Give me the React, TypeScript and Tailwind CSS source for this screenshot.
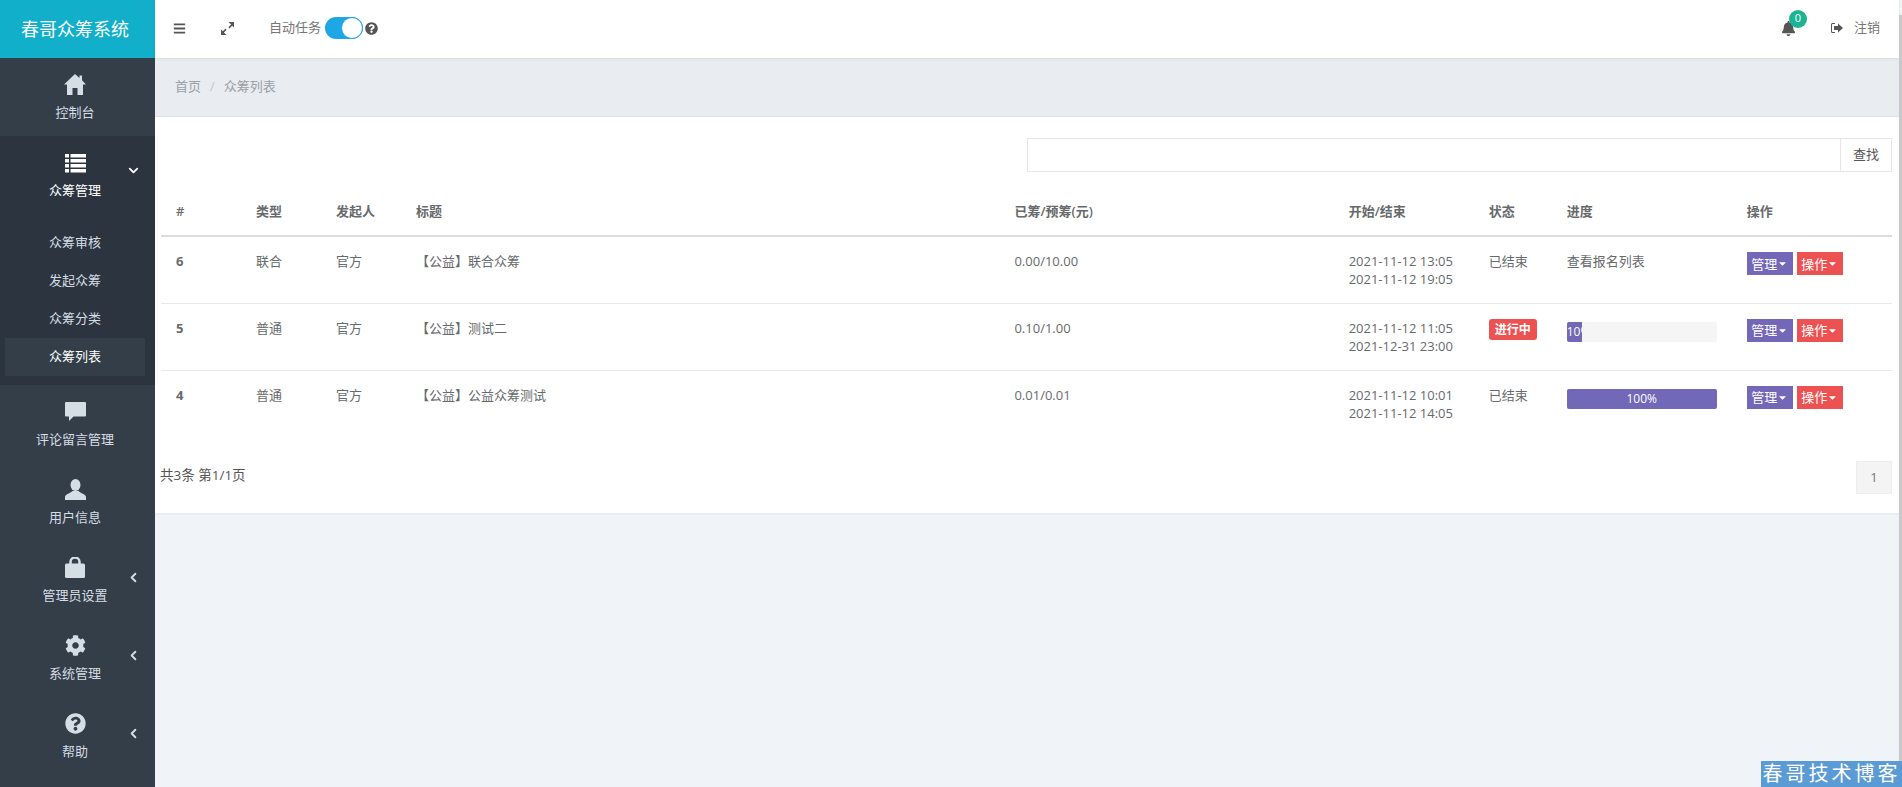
import { FaBars, FaCog, FaQuestionCircle, FaBell, FaCaretDown } from 'react-icons/fa'
import { FiChevronDown, FiChevronLeft } from 'react-icons/fi'
import type { ReactNode } from 'react'

const FONT = "font-['Open_Sans','Noto_Sans_CJK_SC',sans-serif]"

function HomeIcon() {
  return (
    <svg width="22" height="21" viewBox="0 0 22 21" fill="currentColor">
      <path d="M11 0l4.5 4V1.5H18v4.8l4 4.2h-3V21h-5.5v-7h-5v7H3V10.500H0z" />
    </svg>
  )
}

function ListIcon() {
  return (
    <svg width="21" height="19" viewBox="0 0 21 19" fill="currentColor">
      <rect x="0" y="0" width="4" height="3.5" />
      <rect x="5.5" y="0" width="15.5" height="3.5" />
      <rect x="0" y="5" width="4" height="3.5" />
      <rect x="5.5" y="5" width="15.5" height="3.5" />
      <rect x="0" y="10" width="4" height="3.5" />
      <rect x="5.5" y="10" width="15.5" height="3.5" />
      <rect x="0" y="15" width="4" height="3.5" />
      <rect x="5.500" y="15" width="15.5" height="3.5" />
    </svg>
  )
}

function CommentIcon() {
  return (
    <svg width="21" height="19" viewBox="0 0 21 19" fill="currentColor">
      <path d="M1 0h19a1 1 0 0 1 1 1v12.500a1 1 0 0 1-1 1H8.500L4 19v-4.500H1a1 1 0 0 1-1-1V1a1 1 0 0 1 1-1z" />
    </svg>
  )
}

function UserIcon() {
  return (
    <svg width="21" height="21" viewBox="0 0 21 21" fill="currentColor">
      <ellipse cx="10.500" cy="6" rx="5" ry="6" />
      <path d="M0 21v-3c0-3 5.500-3.500 7.500-6h6c2 2.500 7.500 3 7.500 6v3z" />
    </svg>
  )
}

function LockIcon() {
  return (
    <svg width="20" height="21" viewBox="0 0 20 21" fill="currentColor">
      <path d="M5.500 8V5a4.500 4.500 0 0 1 9 0v3" fill="none" stroke="currentColor" strokeWidth="2.500" />
      <rect x="0" y="6.500" width="20" height="14.500" rx="1.500" />
    </svg>
  )
}

function ResizeIcon() {
  return (
    <svg width="13" height="13" viewBox="0 0 13 13" fill="#555">
      <path d="M7.500 0H13v5.500l-1.800-1.800-2.700 2.700-1.100-1.100 2.700-2.700z" />
      <path d="M5.500 13H0V7.500l1.800 1.800 2.700-2.700 1.100 1.100-2.700 2.700z" />
    </svg>
  )
}

function LogoutIcon() {
  return (
    <svg width="12" height="10" viewBox="0 0 12 10" fill="#555">
      <path d="M0 1.500A1.500 1.500 0 0 1 1.500 0H4v1H1.500a.5.5 0 0 0-.5.5v7a.5.5 0 0 0 .5.5H4v1H1.500A1.500 1.500 0 0 1 0 8.500z" />
      <path d="M3 3h4V.5L12 5 7 9.500V7H3z" />
    </svg>
  )
}

function NavItem({ icon, label, arrow }: { icon: ReactNode; label: string; arrow?: boolean }) {
  return (
    <div className="relative h-[78px] flex flex-col items-center pt-[16px] pr-[5px] text-[#d5dde5]">
      <div className="h-[21px] flex items-center">{icon}</div>
      <div className="text-[13px] leading-[18px] mt-[8px]">{label}</div>
      {arrow && <FiChevronLeft className="absolute right-[14px] top-[29px] text-[15px]" strokeWidth={3} />}
    </div>
  )
}

const SUBMENU = ['众筹审核', '发起众筹', '众筹分类', '众筹列表']

function Sidebar() {
  return (
    <aside className="w-[155px] shrink-0 bg-[#343e48] flex flex-col">
      <div className="h-[58px] bg-[#12afcb] text-white text-[18px] flex items-center justify-center pr-[5px]">春哥众筹系统</div>
      <NavItem icon={<HomeIcon />} label="控制台" />
      <div className="bg-[#2c353f] h-[249px] flex flex-col">
        <div className="relative h-[78px] flex flex-col items-center pt-[17px] pr-[5px] text-white">
          <div className="h-[21px] flex items-center"><ListIcon /></div>
          <div className="text-[13px] leading-[18px] mt-[7px]">众筹管理</div>
          <FiChevronDown className="absolute right-[14px] top-[27px] text-[15px]" strokeWidth={3} />
        </div>
        <div className="flex flex-col pl-[5px] pr-[10px] pt-[10px]">
          {SUBMENU.map((s) => (
            <div
              key={s}
              className={`h-[38px] flex items-center justify-center text-[13px] ${s === '众筹列表' ? 'bg-[#343e48] text-white' : 'text-[#d5dde5]'}`}
            >
              {s}
            </div>
          ))}
        </div>
      </div>
      <NavItem icon={<CommentIcon />} label="评论留言管理" />
      <NavItem icon={<UserIcon />} label="用户信息" />
      <NavItem icon={<LockIcon />} label="管理员设置" arrow />
      <NavItem icon={<FaCog size={21} />} label="系统管理" arrow />
      <NavItem icon={<FaQuestionCircle size={21} />} label="帮助" arrow />
    </aside>
  )
}

function Header() {
  return (
    <header className="h-[58px] bg-white flex items-center shrink-0 pb-[2px] shadow-[0_1px_3px_rgba(0,0,0,0.08)] relative">
      <FaBars className="ml-[18px] text-[#555] text-[13px]" />
      <div className="ml-[35px]"><ResizeIcon /></div>
      <span className="ml-[35px] text-[13px] text-[#777]">自动任务</span>
      <div className="ml-[4px] w-[38px] h-[22px] rounded-full bg-[#1ea7e4] relative">
        <div className="absolute right-0 top-0 w-[22px] h-[22px] rounded-full bg-white border border-[#1ea7e4]" />
      </div>
      <FaQuestionCircle className="ml-[2px] text-[#555] text-[13px]" />
      <div className="ml-auto relative mr-[35px]">
        <FaBell className="text-[#555] text-[15px]" />
        <span className="absolute -top-[11px] left-[8px] w-[18px] h-[18px] rounded-full bg-[#1ab394] text-white text-[11px] flex items-center justify-center">0</span>
      </div>
      <LogoutIcon />
      <span className="ml-[11px] mr-[19px] text-[13px] text-[#777]">注销</span>
    </header>
  )
}

type Row = {
  id: number
  type: string
  title: string
  amount: string
  start: string
  end: string
  status: ReactNode
  progress: ReactNode
}

function Bar({ percent, label }: { percent: number; label: string }) {
  return (
    <div className="mt-[3px] w-[150px] h-[20px] bg-[#f5f5f5] rounded-[2px] overflow-hidden">
      <div className="h-full bg-[#7367b8] text-white text-[12px] leading-[20px] text-center overflow-hidden whitespace-nowrap" style={{ width: `${percent}%` }}>
        {label}
      </div>
    </div>
  )
}

const ROWS: Row[] = [
  {
    id: 6, type: '联合', title: '【公益】联合众筹', amount: '0.00/10.00',
    start: '2021-11-12 13:05', end: '2021-11-12 19:05', status: '已结束', progress: '查看报名列表',
  },
  {
    id: 5, type: '普通', title: '【公益】测试二', amount: '0.10/1.00',
    start: '2021-11-12 11:05', end: '2021-12-31 23:00',
    status: <span className="inline-block w-[48px] h-[21px] rounded-[3px] bg-[#ec5252] text-white text-[12px] font-bold leading-[21px] text-center">进行中</span>,
    progress: <Bar percent={10} label="10%" />,
  },
  {
    id: 4, type: '普通', title: '【公益】公益众筹测试', amount: '0.01/0.01',
    start: '2021-11-12 10:01', end: '2021-11-12 14:05', status: '已结束', progress: <Bar percent={100} label="100%" />,
  },
]

function ActionButton({ label, color }: { label: string; color: string }) {
  return (
    <span className={`inline-flex items-center justify-center w-[46px] h-[23px] text-white text-[13px] ${color}`}>
      {label}
      <FaCaretDown className="text-[11px]" />
    </span>
  )
}

function DataTable() {
  const headers = ['#', '类型', '发起人', '标题', '已筹/预筹(元)', '开始/结束', '状态', '进度', '操作']
  return (
    <table className="w-full table-fixed border-collapse text-[13px] text-[#676a6c]">
      <colgroup>
        <col className="w-[80px]" />
        <col className="w-[80px]" />
        <col className="w-[80px]" />
        <col className="w-[598px]" />
        <col className="w-[334px]" />
        <col className="w-[140px]" />
        <col className="w-[78px]" />
        <col className="w-[180px]" />
        <col className="w-[160px]" />
      </colgroup>
      <thead>
        <tr className="h-[64px] border-b-2 border-[#dddddd]">
          {headers.map((h) => (
            <th key={h} className="px-[15px] pb-[14px] align-bottom text-left font-semibold">{h}</th>
          ))}
        </tr>
      </thead>
      <tbody>
        {ROWS.map((r, i) => (
          <tr key={r.id} className={`h-[67px] align-top leading-[18px] ${i < 2 ? 'border-b border-[#e7eaec]' : ''}`}>
            <td className="px-[15px] pt-[15px] font-bold">{r.id}</td>
            <td className="px-[15px] pt-[15px]">{r.type}</td>
            <td className="px-[15px] pt-[15px]">官方</td>
            <td className="px-[15px] pt-[15px]">{r.title}</td>
            <td className="px-[15px] pt-[15px]">{r.amount}</td>
            <td className="px-[15px] pt-[15px]">{r.start}<br />{r.end}</td>
            <td className="px-[15px] pt-[15px]">{r.status}</td>
            <td className="px-[15px] pt-[15px]">{r.progress}</td>
            <td className="px-[15px] pt-[15px]">
              <div className="flex gap-[4px]">
                <ActionButton label="管理" color="bg-[#7367b8]" />
                <ActionButton label="操作" color="bg-[#ec5252]" />
              </div>
            </td>
          </tr>
        ))}
      </tbody>
    </table>
  )
}

export default function App() {
  return (
    <div className={`relative flex h-screen overflow-hidden bg-[#f0f3f8] ${FONT}`}>
      <Sidebar />
      <main className="flex-1 min-w-0 flex flex-col pr-[3px]">
        <Header />
        <div className="h-[59px] shrink-0 bg-[#e9ecf0] border-b border-[#dfe2e6] flex items-center px-[20px] text-[13px] text-[#9a9fa5]">
          <span>首页</span>
          <span className="mx-[9px] text-[#c4c8cc]">/</span>
          <span>众筹列表</span>
        </div>
        <section className="h-[398px] shrink-0 bg-white border-b-2 border-[#e9ecf0] pl-[6px] pr-[7px] pt-[21px]">
          <div className="flex justify-end">
            <div className="w-[814px] h-[34px] border border-[#e5e6e7] bg-white" />
            <div className="w-[51px] h-[34px] border border-l-0 border-[#e5e6e7] flex items-center justify-center text-[13px] text-[#555]">查找</div>
          </div>
          <DataTable />
          <div className="flex items-center justify-between mt-[24px]">
            <span className="text-[13.5px] text-[#555] -mt-[4px] -ml-[1px]">共3条 第1/1页</span>
            <span className="w-[36px] h-[33px] bg-[#f4f4f4] border border-[#eeeeee] flex items-center justify-center text-[13px] text-[#777]">1</span>
          </div>
        </section>
      </main>
      <div className="absolute right-0 top-[15px] bottom-0 w-[3px] bg-[#c8c8c8]" />
      <div className="absolute right-0 bottom-0 w-[141px] h-[26px] bg-[#5b9bd5] text-white text-[20px] leading-[26px] tracking-[3px] text-center whitespace-nowrap">春哥技术博客</div>
    </div>
  )
}
